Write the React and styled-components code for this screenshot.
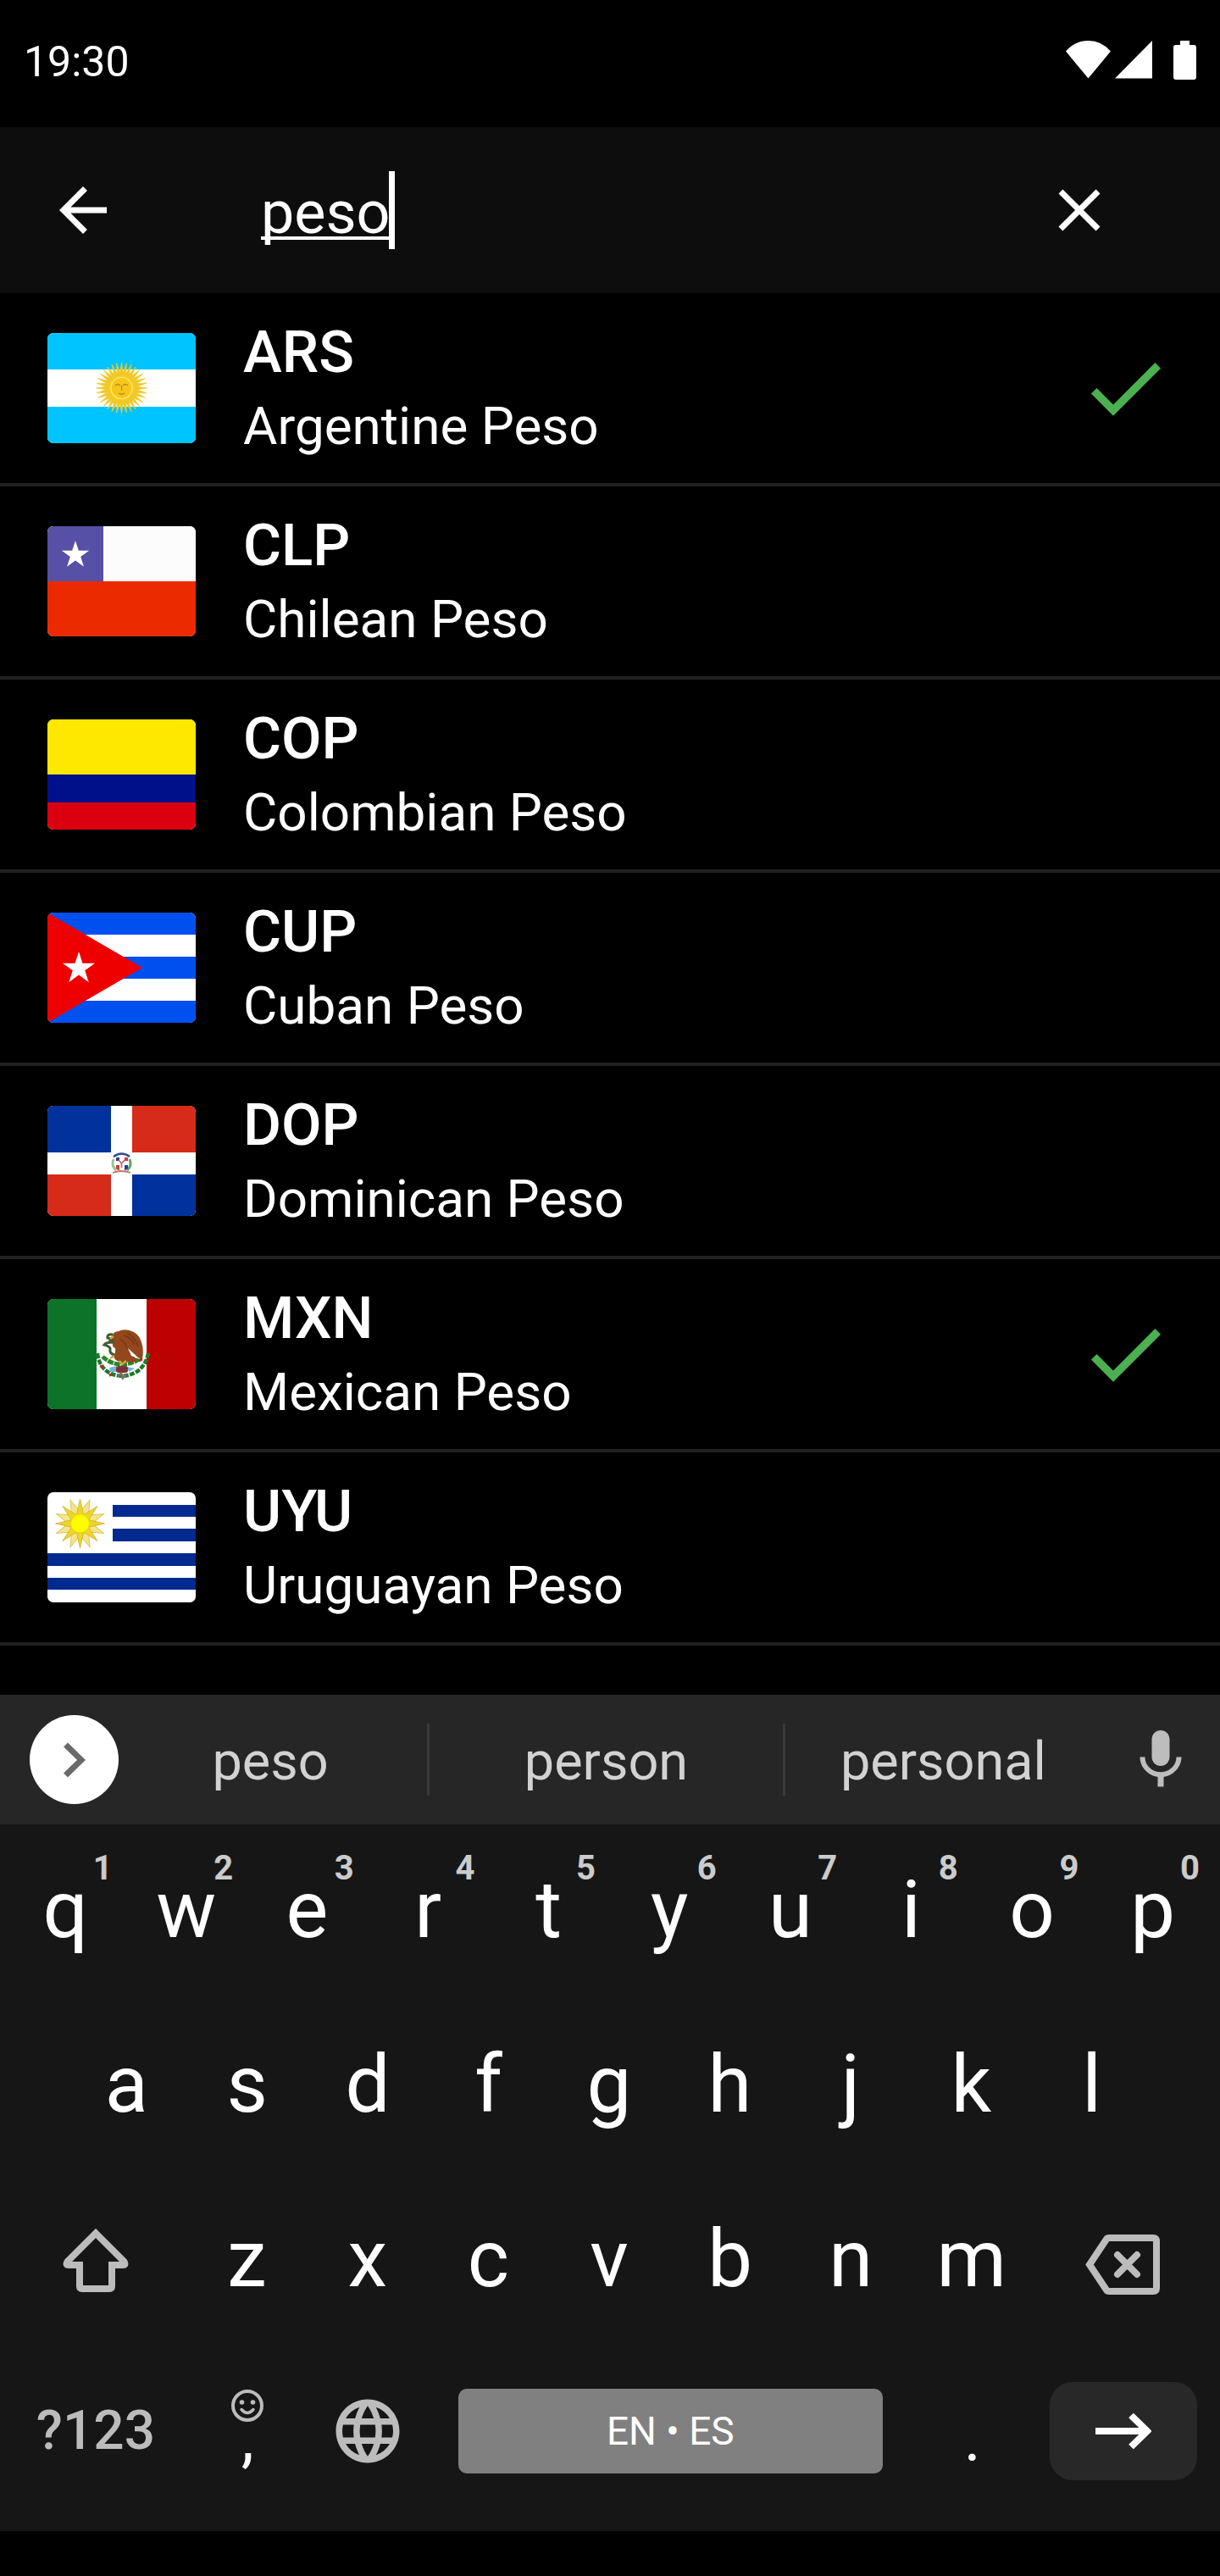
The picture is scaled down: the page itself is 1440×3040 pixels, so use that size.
import React, { useState } from "react";
import styled, { createGlobalStyle } from "styled-components";
import { MdLanguage } from "react-icons/md";

const GlobalStyle = createGlobalStyle`
  *, *::before, *::after { box-sizing: border-box; }
  body {
    margin: 0;
    background: #000;
    color: #fff;
    font-family: Roboto, "Liberation Sans", sans-serif;
  }
  button {
    margin: 0;
    padding: 0;
    border: 0;
    background: none;
    color: inherit;
    font-family: inherit;
    cursor: pointer;
  }
  svg { display: block; flex: none; }
`;

const Screen = styled.div`
  min-height: 100vh;
  display: flex;
  flex-direction: column;
`;

/* ---------- status bar ---------- */

const StatusBar = styled.header`
  height: 150px;
  padding: 0 28px 4px;
  display: flex;
  align-items: center;
  justify-content: space-between;
  font-size: 50px;
  line-height: 56px;
`;

const StatusIcons = styled.div`
  display: flex;
`;

const Signal = styled.svg`
  margin: 0 25px 0 5px;
`;

/* ---------- search bar ---------- */

const SearchBar = styled.form`
  height: 196px;
  padding: 0 124px 0 56px;
  display: flex;
  align-items: center;
  background: #0d0d0d;
`;

const IconButton = styled.button`
  width: 84px;
  height: 84px;
  flex: none;
`;

const SearchField = styled.div`
  flex: 1;
  min-width: 0;
  padding-left: 168px;
  display: flex;
  align-items: center;
`;

const SearchInput = styled.input`
  field-sizing: content;
  height: 92px;
  min-width: 0;
  padding: 6px 0 0;
  border: 0;
  outline: 0;
  background: none;
  color: #fff;
  caret-color: transparent;
  font: 400 70px Roboto, "Liberation Sans", sans-serif;
  text-decoration: underline;
  text-decoration-thickness: 4px;
  text-underline-offset: 4px;
  text-decoration-skip-ink: none;
`;

const Caret = styled.span`
  width: 7px;
  height: 92px;
  margin-left: -1px;
  background: #fff;
`;

/* ---------- currency list ---------- */

const CurrencyList = styled.ul`
  flex: 1;
  margin: 0;
  padding: 0;
  list-style: none;
`;

const CurrencyRow = styled.label`
  height: 228px;
  padding: 0 56px;
  display: flex;
  align-items: center;
  gap: 56px;
  border-bottom: 4px solid #212121;
  cursor: pointer;
`;

const FlagFrame = styled.svg`
  width: 175px;
  height: 130px;
  border-radius: 7px;
  background: #fff;
`;

const CurrencyText = styled.span`
  flex: 1;
  padding-top: 2px;
  display: flex;
  flex-direction: column;
  line-height: 87px;
`;

const Code = styled.span`
  font-size: 69px;
  font-weight: 500;
`;

const Name = styled.span`
  font-size: 62px;
`;

const Tick = styled.input`
  appearance: none;
  width: 112px;
  height: 112px;
  margin: 0;
  background: transparent;
  clip-path: polygon(37.5% 67.4%, 20.1% 50%, 14.2% 55.9%, 37.5% 79.2%, 87.5% 29.2%, 81.6% 23.3%);
  &:checked { background: #4caf50; }
`;

/* ---------- keyboard ---------- */

const Keyboard = styled.section`
  margin-bottom: 53px;
  padding-bottom: 20px;
  background: #161616;
`;

const SuggestionBar = styled.div`
  height: 153px;
  display: grid;
  grid-template-columns: 134px 8fr 9fr 8fr 140px;
  align-items: center;
  background: #262626;
  color: #d2d2d2;
`;

const ExpandButton = styled.button`
  width: 105px;
  height: 105px;
  margin-left: 35px;
  display: grid;
  place-items: center;
  border-radius: 50%;
  background: #fff;
`;

const Suggestion = styled.button`
  height: 85px;
  padding-top: 4px;
  border-right: ${(p) => (p.$last ? "0" : "3px solid #3a3a3a")};
  font-size: 63px;
  line-height: 80px;
`;

const MicButton = styled.button`
  display: grid;
  place-items: center;
  color: #bdbdbd;
`;

const KeyRow = styled.div`
  height: ${(p) => (p.$bottom ? 196 : 206)}px;
  padding: 0 calc(${(p) => (p.$inset ? "5%" : "0%")} + 7px);
  display: grid;
  grid-template-columns: ${(p) => p.$columns};
`;

const Key = styled.button`
  position: relative;
  min-width: 0;
  padding: 0 2px 4px 0;
  display: flex;
  align-items: center;
  justify-content: center;
  font-size: 94px;
  line-height: 110px;
`;

const ModeKey = styled(Key)`
  padding: 0 2px 0 0;
  font-size: 64px;
  font-weight: 500;
  color: #bcbcbc;
`;

const IconKey = styled(Key)`
  padding: 0 2px 0 0;
  color: #bcbcbc;
`;

const PunctuationKey = styled(Key)`
  padding: 16px 0 0;
  font-size: 76px;
`;

const Hint = styled.span`
  position: absolute;
  top: 32px;
  right: 17px;
  font-size: 40px;
  line-height: 40px;
  font-weight: 700;
  color: #cbcbcb;
`;

const EmojiHint = styled.svg`
  position: absolute;
  top: 49px;
  left: calc(50% - 19px);
  color: #bcbcbc;
`;

const KeySlot = styled.div`
  padding: 0 ${(p) => p.$gutter}px;
  display: flex;
  align-items: center;
`;

const SpaceKey = styled.button`
  flex: 1;
  height: 100px;
  border-radius: 10px;
  background: #808080;
  color: #fff;
  font-size: 46px;
`;

const EnterKey = styled.button`
  flex: 1;
  height: 116px;
  display: grid;
  place-items: center;
  border-radius: 27px;
  background: #282828;
`;

/* ---------- flags ---------- */

const starPoints = (cx, cy, outer, inner, n = 5) =>
  Array.from({ length: n * 2 }, (_, i) => {
    const r = i % 2 ? inner : outer;
    const a = (Math.PI * i) / n - Math.PI / 2;
    return `${(cx + r * Math.cos(a)).toFixed(2)},${(cy + r * Math.sin(a)).toFixed(2)}`;
  }).join(" ");

const flags = {
  ARS: (
    <>
      <path fill="#00c4ff" d="M0 0h175v43H0zM0 87h175v43H0z" />
      <polygon points={starPoints(87.5, 65, 30, 18, 32)} fill="#f0c928" stroke="#f0c928" strokeWidth="0.8" />
      <circle cx="87.5" cy="65" r="14.5" fill="#f8d21c" />
      <circle cx="87.5" cy="65" r="12.5" fill="#f6c61c" stroke="#fbe98c" strokeWidth="1.2" />
      <path d="M80 62q3-3 6 0M89 62q3-3 6 0M87.5 62v6M84 71q3.5 2.5 7 0" fill="none" stroke="#b98a14" strokeWidth="1.3" />
    </>
  ),
  CLP: (
    <>
      <path fill="#fcfcfc" d="M0 0h175v65H0z" />
      <path fill="#5650a6" d="M0 0h66v65H0z" />
      <path fill="#eb2a00" d="M0 65h175v65H0z" />
      <polygon points={starPoints(33, 34, 17, 6.5)} fill="#fff" />
    </>
  ),
  COP: (
    <>
      <path fill="#ffe800" d="M0 0h175v65H0z" />
      <path fill="#00108a" d="M0 65h175v33H0z" />
      <path fill="#db000f" d="M0 98h175v32H0z" />
    </>
  ),
  CUP: (
    <>
      <path fill="#0050f0" d="M0 0h175v26H0zM0 52h175v26H0zM0 104h175v26H0z" />
      <path fill="#ee0000" d="M0 0l112 65L0 130z" />
      <polygon points={starPoints(37, 66, 20, 7.6)} fill="#fff" />
    </>
  ),
  DOP: (
    <>
      <path fill="#00319c" d="M0 0h75v55H0zM100 81h75v49h-75z" />
      <path fill="#d62a1a" d="M100 0h75v55h-75zM0 81h75v49H0z" />
      <path d="M78 60q9.500-7 19 0" fill="none" stroke="#2c4a94" strokeWidth="2.5" />
      <path d="M78 63q-3 8 3 13" fill="none" stroke="#9cc492" strokeWidth="3" />
      <path d="M97 63q3 8-3 13" fill="none" stroke="#5ca562" strokeWidth="3" />
      <path fill="#25408c" d="M81 61h4v4h-4zM91 70h4v4q-2 2-4 2z" />
      <path fill="#cf3b3b" d="M91 61h4v4h-4zM81 70h4v6q-3 0-4-2z" />
      <path d="M84 64l3.500 4 3.500-4M87.500 67v6" fill="none" stroke="#c9667c" strokeWidth="1.8" />
      <path d="M77 79q10-4 21 0" fill="none" stroke="#d0705c" strokeWidth="1.8" />
    </>
  ),
  MXN: (
    <>
      <path fill="#0c7328" d="M0 0h58v130H0z" />
      <path fill="#bd0000" d="M117 0h58v130h-58z" />
      <path d="M59 64q3 25 29 27 26-2 31-27" fill="none" stroke="#1f7a2d" strokeWidth="4.5" strokeDasharray="6 1.5" />
      <path d="M65 68q10 9 22 9 14 0 22-7" fill="none" stroke="#2c8427" strokeWidth="5" strokeDasharray="7 1" />
      <path fill="#93471c" d="M76 44q2-6 8-6 5-3 13-1 11 3 14 14 3 9 1 20-3 1-4-2-2 1-4-2l-6-5 8 10q-5 5-11 2-5 3-9 0-7-1-8-7 3-4 2-9-4-1-3-6-4 1-5-3z" />
      <path fill="#fff" d="M95 58l14 13-10-4z" />
      <path d="M90 43q9 2 13 11M94 40q9 4 13 16M86 48q7 4 8 11" fill="none" stroke="#6f3314" strokeWidth="1.2" />
      <path d="M77 42q-7-1-6 4 7 1 6 5-8 0-10 3 8 2 7 6-1 4 5 6" fill="none" stroke="#3b5d32" strokeWidth="3" />
      <path d="M74 70l5-3M78 44l-4 3M85 73l3 4 5-4" fill="none" stroke="#d3a33c" strokeWidth="2.5" />
      <path fill="#7fb0d8" d="M73 81l9-2v7l-8 0zM94 80l9 2-7 4z" />
      <rect x="81" y="79" width="14" height="8" rx="3" fill="#7a3434" />
      <path d="M62 79l4 1M108 73l4-2M73 90l3-1" stroke="#b42a25" strokeWidth="3" />
      <path d="M83 91l4-3 2 5 4-4" fill="none" stroke="#77706a" strokeWidth="3" />
    </>
  ),
  UYU: (
    <>
      <path fill="#002a8f" d="M77 15h98v14H77zM77 43h98v15H77zM0 72h175v15H0zM0 101h175v14H0z" />
      <g transform="rotate(22.5 38.5 37)">
        <polygon points={starPoints(38.5, 37, 30, 14, 8)} fill="#f5e58a" stroke="#dfc65a" strokeWidth="1" />
      </g>
      <polygon points={starPoints(38.5, 37, 29, 11, 8)} fill="#eed526" stroke="#cdb030" strokeWidth="0.8" />
      <circle cx="38.5" cy="37" r="11" fill="#fffb00" stroke="#efd800" strokeWidth="1" />
    </>
  ),
};

const currencies = [
  { code: "ARS", name: "Argentine Peso", selected: true },
  { code: "CLP", name: "Chilean Peso" },
  { code: "COP", name: "Colombian Peso" },
  { code: "CUP", name: "Cuban Peso" },
  { code: "DOP", name: "Dominican Peso" },
  { code: "MXN", name: "Mexican Peso", selected: true },
  { code: "UYU", name: "Uruguayan Peso" },
];

function LetterKeys({ letters, hints }) {
  return [...letters].map((letter, i) => (
    <Key key={letter} type="button">
      {letter}
      {hints && <Hint>{hints[i]}</Hint>}
    </Key>
  ));
}

export default function App() {
  const [query, setQuery] = useState("peso");
  return (
    <Screen>
      <GlobalStyle />
      <StatusBar>
        <time>19:30</time>
        <StatusIcons>
          <svg width="53" height="50" fill="#fff" aria-hidden="true">
            <path d="M0 12.5Q11 0 26.5 0T53 12.5L26.5 44.5z" />
          </svg>
          <Signal width="44" height="50" fill="#fff" aria-hidden="true">
            <path d="M44 0v44.5H0z" />
          </Signal>
          <svg width="27" height="50" fill="#fff" aria-hidden="true">
            <path d="M8 0h11v5h5q3 0 3 3v35q0 3-3 3H3q-3 0-3-3V8q0-3 3-3h5z" />
          </svg>
        </StatusIcons>
      </StatusBar>

      <SearchBar role="search" onSubmit={(e) => e.preventDefault()}>
        <IconButton type="button" aria-label="Back">
          <svg width="84" height="84" viewBox="0 0 24 24" fill="currentColor">
            <path d="M20 11H7.83l5.59-5.59L12 4l-8 8 8 8 1.41-1.41L7.83 13H20v-2z" />
          </svg>
        </IconButton>
        <SearchField>
          <SearchInput
            type="text"
            aria-label="Search currency"
            spellCheck={false}
            value={query}
            onChange={(e) => setQuery(e.target.value)}
          />
          <Caret />
        </SearchField>
        <IconButton type="button" aria-label="Clear" onClick={() => setQuery("")}>
          <svg width="84" height="84" viewBox="0 0 24 24" fill="currentColor">
            <path d="M19 6.41L17.59 5 12 10.59 6.41 5 5 6.41 10.59 12 5 17.59 6.41 19 12 13.41 17.59 19 19 17.59 13.41 12z" />
          </svg>
        </IconButton>
      </SearchBar>

      <CurrencyList>
        {currencies.map(({ code, name, selected }) => (
          <li key={code}>
            <CurrencyRow>
              <FlagFrame viewBox="0 0 175 130" aria-hidden="true">{flags[code]}</FlagFrame>
              <CurrencyText>
                <Code>{code}</Code>
                <Name>{name}</Name>
              </CurrencyText>
              <Tick type="checkbox" defaultChecked={selected} />
            </CurrencyRow>
          </li>
        ))}
      </CurrencyList>

      <Keyboard aria-label="Keyboard">
        <SuggestionBar>
          <ExpandButton type="button" aria-label="More">
            <svg width="26" height="42" fill="none" stroke="#6a6a6a" strokeWidth="7">
              <path d="M2.5 3L21 21 2.5 39" />
            </svg>
          </ExpandButton>
          <Suggestion type="button">peso</Suggestion>
          <Suggestion type="button">person</Suggestion>
          <Suggestion type="button" $last>personal</Suggestion>
          <MicButton type="button" aria-label="Voice input">
            <svg width="84" height="84" viewBox="0 0 24 24" fill="currentColor">
              <path d="M12 14c1.66 0 3-1.34 3-3V5c0-1.66-1.34-3-3-3S9 3.34 9 5v6c0 1.66 1.34 3 3 3zm5.3-3c0 3-2.54 5.1-5.3 5.1S6.7 14 6.7 11H5c0 3.41 2.72 6.23 6 6.72V21h2v-3.28c3.28-.48 6-3.3 6-6.72h-1.7z" />
            </svg>
          </MicButton>
        </SuggestionBar>

        <KeyRow $columns="repeat(10, 1fr)">
          <LetterKeys letters="qwertyuiop" hints="1234567890" />
        </KeyRow>
        <KeyRow $inset $columns="repeat(9, 1fr)">
          <LetterKeys letters="asdfghjkl" />
        </KeyRow>
        <KeyRow $columns="3fr repeat(7, 2fr) 3fr">
          <IconKey type="button" aria-label="Shift">
            <svg width="78" height="76" fill="none" stroke="currentColor" strokeWidth="8">
              <path d="M39 5.5L72.5 39Q75 43 71 43H58v25q0 3-3 3H23q-3 0-3-3V43H7q-4 0-1.5-4z" />
            </svg>
          </IconKey>
          <LetterKeys letters="zxcvbnm" />
          <IconKey type="button" aria-label="Backspace">
            <svg width="88" height="62" viewBox="0 4 88 62" overflow="visible" fill="none" stroke="currentColor" strokeWidth="8">
              <path d="M28 8h52q4 0 4 4v55q0 4-4 4H28q-2 0-3-1.5L5 39.5 25 9.5Q26 8 28 8z" />
              <path d="M38 28l23 23M61 28L38 51" strokeLinecap="round" />
            </svg>
          </IconKey>
        </KeyRow>
        <KeyRow $bottom $columns="3fr 2fr 2fr 8fr 2fr 3fr">
          <ModeKey type="button">?123</ModeKey>
          <PunctuationKey type="button">
            ,
            <EmojiHint width="38" height="38" fill="none" stroke="currentColor" strokeWidth="4" aria-hidden="true">
              <circle cx="19" cy="19" r="17" />
              <path d="M12 23.5q7 8 14 0" strokeWidth="3.5" strokeLinecap="round" />
              <circle cx="12.5" cy="15" r="2.8" fill="currentColor" stroke="none" />
              <circle cx="25.5" cy="15" r="2.8" fill="currentColor" stroke="none" />
            </EmojiHint>
          </PunctuationKey>
          <IconKey type="button" aria-label="Switch language">
            <MdLanguage size={90} />
          </IconKey>
          <KeySlot $gutter={35}>
            <SpaceKey type="button">EN • ES</SpaceKey>
          </KeySlot>
          <PunctuationKey type="button">.</PunctuationKey>
          <KeySlot $gutter={20}>
            <EnterKey type="button" aria-label="Enter">
              <svg width="66" height="42" fill="none" stroke="#fff" strokeWidth="8">
                <path d="M0 21h60M42 2.5L61 21 42 39.5" />
              </svg>
            </EnterKey>
          </KeySlot>
        </KeyRow>
      </Keyboard>
    </Screen>
  );
}
